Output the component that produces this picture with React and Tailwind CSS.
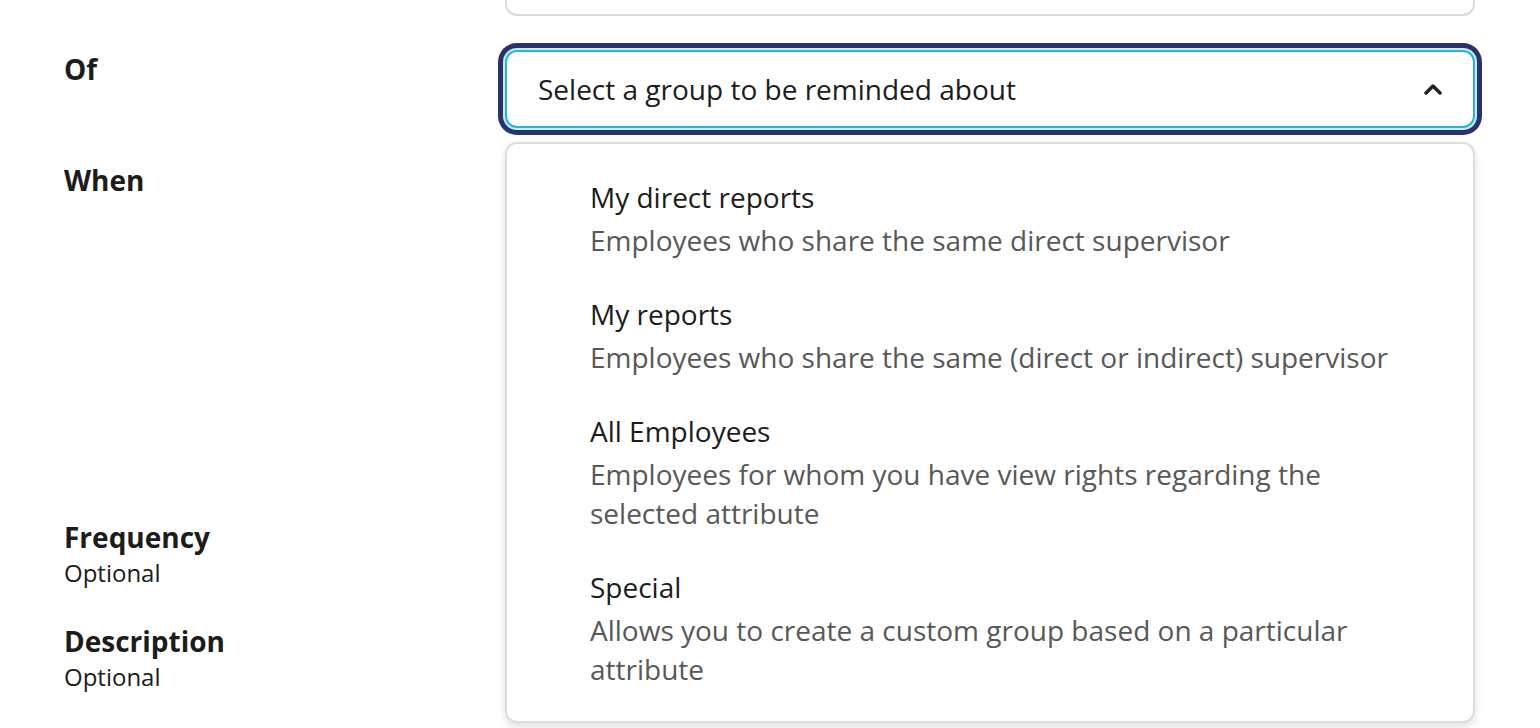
import React, { useState } from 'react';

const groups = [
  { id: 'direct', title: 'My direct reports', description: 'Employees who share the same direct supervisor' },
  { id: 'reports', title: 'My reports', description: 'Employees who share the same (direct or indirect) supervisor' },
  { id: 'all', title: 'All Employees', description: 'Employees for whom you have view rights regarding the selected attribute' },
  { id: 'special', title: 'Special', description: 'Allows you to create a custom group based on a particular attribute' },
];

const ChevronUp = () => (
  <svg width="20" height="12" viewBox="0 0 20 12" fill="none">
    <polyline points="3,10 10,3 17,10" stroke="#222" strokeWidth="3.5" strokeLinecap="round" strokeLinejoin="round" />
  </svg>
);

const Label = ({ title, optional }) => (
  <div className="flex flex-col">
    <span className="text-[28px] leading-[40px] font-bold text-[#1c1c1c]">{title}</span>
    {optional && <span className="text-[24px] leading-[32px] text-[#1c1c1c]">Optional</span>}
  </div>
);

const Row = ({ label, children }) => (
  <div className="grid grid-cols-[441px_970px] items-start">
    <div className="-mt-[1px]">{label}</div>
    <div>{children}</div>
  </div>
);

export default function App() {
  const [open, setOpen] = useState(true);
  const [selected, setSelected] = useState(null);

  return (
    <div className="w-[1540px] h-[728px] overflow-hidden bg-white pl-16 font-['Open_Sans',sans-serif]">
      {/* tail end of the field above */}
      <div className="grid grid-cols-[441px_970px]">
        <div />
        <div className="h-4 border-2 border-t-0 border-[#dadada] rounded-b-xl" />
      </div>

      <div className="flex flex-col gap-[33px] mt-[34px]">
        <Row label={<Label title="Of" />}>
          <div className="relative">
            <button
              onClick={() => setOpen(!open)}
              className="w-full h-[78px] flex items-center justify-between pl-[31px] pr-[30px] bg-white border-2 border-[#2cb4d6] rounded-xl shadow-[0_0_0_2px_#c8eef8,0_0_0_7px_#2a3170] text-left"
            >
              <span className="text-[28px] leading-[40px] text-[#1c1c1c]">
                {selected ? groups.find((g) => g.id === selected).title : 'Select a group to be reminded about'}
              </span>
              <ChevronUp />
            </button>

            {open && (
              <ul className="absolute left-0 right-0 top-[calc(100%+14px)] z-10 bg-white border-2 border-[#dcdcdc] rounded-xl shadow-[0_4px_8px_rgba(0,0,0,0.12)] pt-4 pb-[15px]">
                {groups.map((g) => (
                  <li
                    key={g.id}
                    onClick={() => { setSelected(g.id); setOpen(false); }}
                    className="pl-[83px] pr-16 py-[17px] cursor-pointer"
                  >
                    <p className="text-[28px] leading-[40px] text-[#1c1c1c]">{g.title}</p>
                    <p className="mt-1 text-[28px] leading-[39px] text-[#585858]">{g.description}</p>
                  </li>
                ))}
              </ul>
            )}
          </div>
        </Row>

        <Row label={<Label title="When" />}>
          <div className="h-[324px]" />
        </Row>

        <Row label={<Label title="Frequency" optional />}>
          <div className="h-[69px]" />
        </Row>

        <Row label={<Label title="Description" optional />}>
          <div className="h-[120px]" />
        </Row>
      </div>
    </div>
  );
}
